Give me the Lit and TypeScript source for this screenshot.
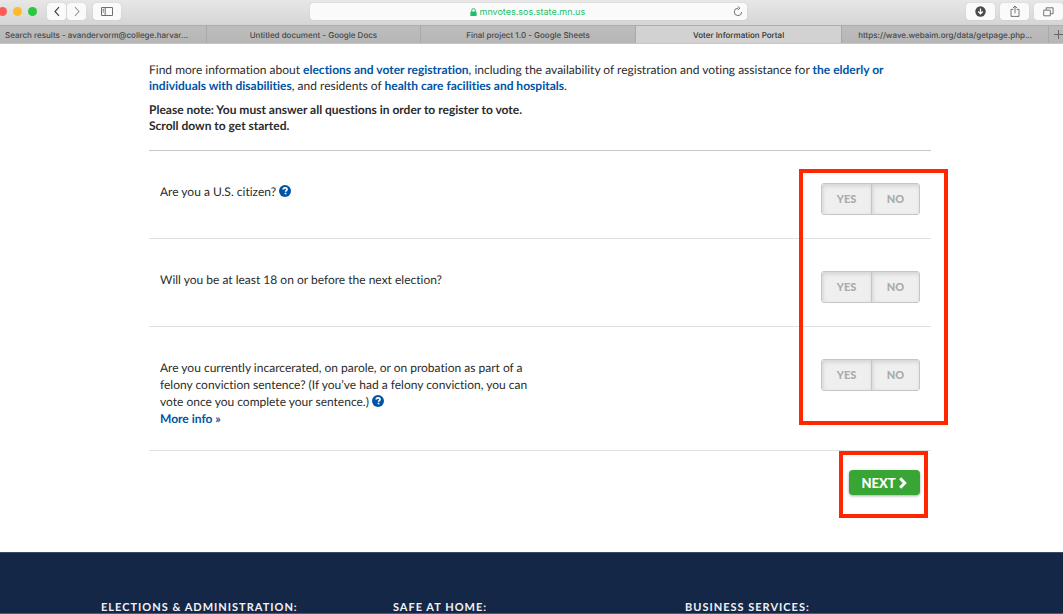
import { LitElement, html, css } from "lit";
import { customElement, property, state } from "lit/decorators.js";

const helpIcon = html`<svg class="help-icon" viewBox="0 0 12 12" aria-hidden="true">
  <circle cx="6" cy="6" r="6" fill="#0054a6" />
  <path d="M4.2 4.6C4.2 3.4 5 2.9 6.1 2.9s1.9.6 1.9 1.6c0 1.1-1.4 1.2-1.4 2.3" fill="none" stroke="#fff" stroke-width="1.7" />
  <rect x="5.7" y="7.7" width="1.7" height="1.6" fill="#fff" />
</svg>`;

@customElement("browser-bar")
class BrowserBar extends LitElement {
  static styles = css`
    :host { display: block; font-family: Inter, "Liberation Sans", sans-serif; }
    .toolbar {
      display: flex; align-items: flex-start; height: 25px; box-sizing: border-box; padding-top: 3px;
      background: linear-gradient(#e7e7e7, #d5d5d5);
    }
    .left { flex: 1 1 310px; display: flex; align-items: center; }
    .right { flex: 1 1 316px; display: flex; justify-content: flex-end; gap: 5px; }
    .lights { display: flex; gap: 6px; margin: 0 10px 0 -2px; }
    .light { width: 9px; height: 9px; border-radius: 50%; }
    .red { background: #fc5b57; }
    .yellow { background: #fdbc2e; }
    .green { background: #28c940; }
    button {
      display: grid; place-items: center; width: 29px; height: 17px; padding: 0; border: 0;
      border-radius: 3px; background: #fafafa; box-shadow: 0 0 1px #aaa;
    }
    .nav { display: flex; gap: 1px; margin-right: 7px; }
    .nav button { width: 19px; }
    .tool { width: 28px; }
    .address {
      flex: 0 1 437px; height: 17px; position: relative; border-radius: 3px; background: #fafafa;
      box-shadow: 0 0 1px #aaa; display: flex; align-items: center; justify-content: center; gap: 3px;
    }
    .address input {
      width: 108px; padding: 0; border: 0; outline: 0; background: none; font: 9px Inter, sans-serif;
      line-height: 17px; height: 17px; color: #1cbf6b;
    }
    .reload { position: absolute; right: 4px; top: 3px; width: 11px; height: 11px; background: none; box-shadow: none; }
    .tabs {
      display: flex; height: 19px; box-sizing: border-box; border-top: 1px solid #adadad;
      border-bottom: 1px solid #c6c6c6; background: linear-gradient(#bdbdbd, #b6b6b6); overflow: hidden;
    }
    .tab {
      flex: 1 1 207px; box-sizing: border-box; min-width: 0; padding: 0 6px; text-align: center; text-decoration: none;
      white-space: nowrap; overflow: hidden; text-overflow: ellipsis;
      font-size: 8px; font-weight: 500; line-height: 18px; color: #474747; border-right: 1px solid #a8a8a8;
    }
    .first { padding: 0 12px 0 5px; text-align: left; }
    .wide { flex-basis: 215px; }
    .active { background: #d2d2d2; color: #2c2c2c; }
    .add { flex: none; width: 14px; height: 17px; padding-left: 5px; border-radius: 0; background: none; box-shadow: none; }
  `;
  render() {
    const tabs = [
      ["Search results - avandervorm@college.harvar...", "first"],
      ["Untitled document - Google Docs", "wide"],
      ["Final project 1.0 - Google Sheets", "wide"],
      ["Voter Information Portal", "active"],
      ["https://wave.webaim.org/data/getpage.php...", ""],
    ];
    return html`
      <div class="toolbar">
        <div class="left">
          <div class="lights"><span class="light red"></span><span class="light yellow"></span><span class="light green"></span></div>
          <div class="nav">
            <button aria-label="Back"><svg width="8" height="11" viewBox="0 0 8 11"><path d="M6 1.2 2 5.5l4 4.3" fill="none" stroke="#444" stroke-width="1.2" /></svg></button>
            <button aria-label="Forward"><svg width="8" height="11" viewBox="0 0 8 11"><path d="m2 1.2 4 4.3-4 4.3" fill="none" stroke="#999" stroke-width="1.1" /></svg></button>
          </div>
          <button class="tool" aria-label="Sidebar"><svg width="12" height="9" viewBox="0 0 12 9"><path d="M.5.5h11v8H.5zM4.2.5v8M1.7 2.3h1.2M1.7 3.7h1.2M1.7 5.1h1.2" fill="none" stroke="#606060" stroke-width=".9" /></svg></button>
        </div>
        <div class="address">
          <svg width="7" height="8" viewBox="0 0 7 8"><rect x=".4" y="3.4" width="6.2" height="4.6" rx=".6" fill="#1cbf6b" /><path d="M1.7 3.7V2.4a1.8 1.8 0 0 1 3.6 0v1.3" fill="none" stroke="#1cbf6b" stroke-width="1" /></svg>
          <input aria-label="Address" value="mnvotes.sos.state.mn.us" />
          <button class="reload" aria-label="Reload"><svg width="10" height="11" viewBox="0 0 10 11"><path d="M5 2.2A3.7 3.7 0 1 0 8.7 6M4.7.4l2.2 1.8-2.2 1.9" fill="none" stroke="#666" stroke-width=".9" /></svg></button>
        </div>
        <div class="right">
          <button aria-label="Downloads"><svg width="11" height="11" viewBox="0 0 11 11"><circle cx="5.5" cy="5.5" r="5.2" fill="#4a4a4a" /><path d="M5.5 2.4v5M3.2 5.5l2.3 2.4 2.3-2.4" fill="none" stroke="#fff" stroke-width="1.3" /></svg></button>
          <button aria-label="Share"><svg width="10" height="13" viewBox="0 0 10 13"><path d="M3.3 4.4H1v7h8v-7H6.7M5 8.3V1M2.9 3.1 5 1l2.1 2.1" fill="none" stroke="#666" stroke-width=".9" /></svg></button>
          <button aria-label="Show all tabs"><svg width="11" height="10" viewBox="0 0 11 10"><path d="M.7 3.2h6.6v5.6H.7zM3.2 3V.8h6.9v5.9H7.5" fill="none" stroke="#666" stroke-width=".9" /></svg></button>
        </div>
      </div>
      <nav class="tabs" aria-label="Tabs">
        ${tabs.map(([name, kind]) => html`<a class="tab ${kind}" href="#">${name}</a>`)}
        <button class="add" aria-label="New tab"><svg width="9" height="9" viewBox="0 0 9 9"><path d="M4.5 0v9M0 4.5h9" stroke="#666" stroke-width="1" /></svg></button>
      </nav>`;
  }
}

@customElement("yes-no")
class YesNo extends LitElement {
  @property() label = "";
  @state() answer = "";
  static styles = css`
    :host { display: block; }
    .toggle {
      display: flex; box-sizing: border-box; height: 32px; border: 1px solid #c6c6c6; border-radius: 3px;
      overflow: hidden;
    }
    button {
      width: 47px; padding: 0 0 2px; border: 0; background: #efefef; color: #aaa;
      font: 900 11px Lato, sans-serif; box-shadow: inset 1px 2px 4px #d2d2d2;
    }
    button:first-child { width: 50px; border-right: 1px solid #c6c6c6; }
    button[aria-pressed="true"] { color: #333; }
  `;
  render() {
    return html`<div class="toggle" role="group" aria-label=${this.label}>
      ${["YES", "NO"].map((v) => html`<button aria-pressed=${this.answer === v} @click=${() => (this.answer = v)}>${v}</button>`)}
    </div>`;
  }
}

@customElement("app-root")
class AppRoot extends LitElement {
  static styles = css`
    :host {
      display: block; background: #fff; color: #2b2b2b; font: 12px/17px Lato, sans-serif;
      text-rendering: geometricPrecision; font-variant-ligatures: none;
    }
    main { padding: 18px 132px 57px 149px; }
    p { margin: 0 0 8px; line-height: 16px; }
    a { color: #0054a6; font-weight: 700; text-decoration: none; }
    .note { margin-bottom: 16px; font-weight: 700; }
    .questions { position: relative; border-top: 1px solid #c8c8c8; }
    .question {
      display: flex; justify-content: space-between; align-items: flex-start;
      padding: 32px 11px 23px; border-bottom: 1px solid #e0e0e0;
    }
    .text { max-width: 370px; }
    .help { display: inline-block; width: 12px; height: 12px; padding: 0; border: 0; background: none; vertical-align: -1px; }
    .help-icon { display: block; width: 12px; height: 12px; }
    .actions { position: relative; display: flex; justify-content: flex-end; padding: 19px 11px 0; }
    .next {
      display: flex; align-items: center; justify-content: center; gap: 2px; width: 71px; height: 25px; padding: 0;
      border: 0; border-radius: 4px; background: #39a535; color: #fff; font: 900 13px Lato, sans-serif;
      box-shadow: 0 1px 3px #aaa;
    }
    .mark { position: absolute; box-sizing: border-box; border: 4px solid #ff2600; pointer-events: none; }
    .mark-answers { top: 18px; right: -17px; bottom: 26px; width: 149px; }
    .mark-next { top: 0; right: 3px; bottom: -23px; width: 89px; }
    footer {
      display: grid; grid-template-columns: repeat(3, 292px); padding: 49px 0 0 101px;
      background: #152747; border-top: 1px solid #3b4a66; overflow: hidden;
    }
    h2 { margin: 0; font-size: 11px; font-weight: 700; line-height: 11px; letter-spacing: 1px; color: #f0f2f5; }
    .edge { height: 2px; background: linear-gradient(90deg, #8a6544 30px, #f1efed 30px calc(100% - 13px), #8a6544 0); box-sizing: border-box; border-top: 1px solid #6b5346; }
  `;
  render() {
    return html`
      <browser-bar></browser-bar>
      <main>
        <p>Find more information about <a href="#">elections and voter registration</a>, including the availability of registration and voting assistance for <a href="#">the elderly or individuals with disabilities</a>, and residents of <a href="#">health care facilities and hospitals</a>.</p>
        <p class="note">Please note: You must answer all questions in order to register to vote.<br />Scroll down to get started.</p>
        <section class="questions">
          <div class="question">
            <div class="text">Are you a U.S. citizen? <button class="help" aria-label="Help">${helpIcon}</button></div>
            <yes-no label="U.S. citizen"></yes-no>
          </div>
          <div class="question">
            <div class="text">Will you be at least 18 on or before the next election?</div>
            <yes-no label="At least 18"></yes-no>
          </div>
          <div class="question">
            <div class="text">Are you currently incarcerated, on parole, or on probation as part of a felony conviction sentence? (If you’ve had a felony conviction, you can vote once you complete your sentence.) <button class="help" aria-label="Help">${helpIcon}</button><br /><a href="#">More info »</a></div>
            <yes-no label="Felony conviction"></yes-no>
          </div>
          <div class="mark mark-answers"></div>
        </section>
        <div class="actions">
          <button class="next">NEXT<svg width="10" height="12" viewBox="0 0 10 12"><path d="M2.2 1.3 6.7 6l-4.5 4.7" fill="none" stroke="#fff" stroke-width="3" /></svg></button>
          <div class="mark mark-next"></div>
        </div>
      </main>
      <footer><h2>ELECTIONS &amp; ADMINISTRATION:</h2><h2>SAFE AT HOME:</h2><h2>BUSINESS SERVICES:</h2></footer>
      <div class="edge"></div>`;
  }
}
